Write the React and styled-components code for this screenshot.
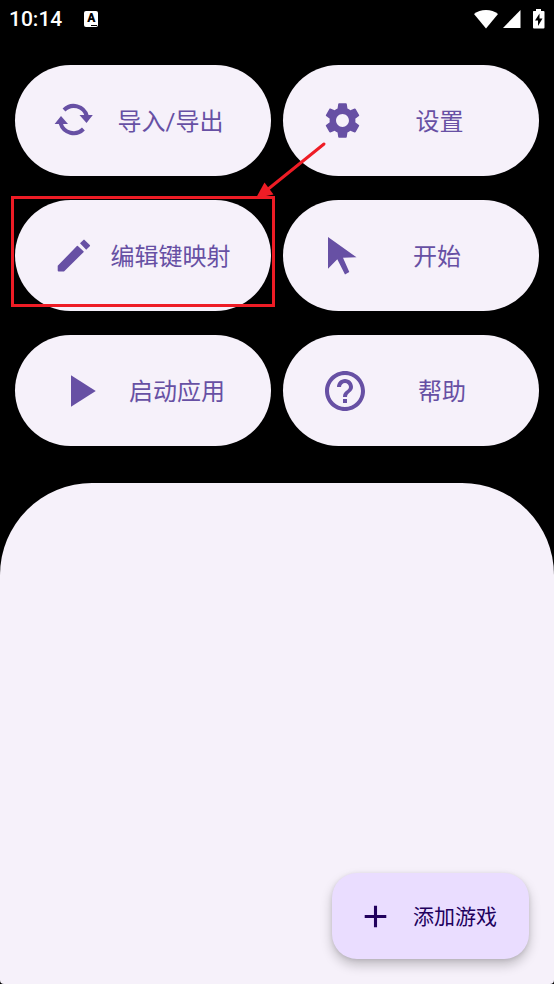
import React from "react";
import styled, { createGlobalStyle } from "styled-components";
import { MdSettings, MdHelpOutline, MdPlayArrow, MdAdd } from "react-icons/md";

const GlobalStyle = createGlobalStyle`
  *, *::before, *::after { box-sizing: border-box; }
  body {
    margin: 0;
    background: #000;
    font-family: Roboto, "Noto Sans CJK SC", sans-serif;
  }
  button { font: inherit; border: 0; cursor: pointer; }
  svg { display: block; flex: none; }
`;

const Screen = styled.div`
  display: flex;
  flex-direction: column;
  min-height: 100vh;
`;

const StatusBar = styled.header`
  display: flex;
  align-items: center;
  height: 38px;
  padding: 0 9px;
  color: #fff;
`;

const Clock = styled.time`
  font-size: 21px;
  font-weight: 500;
  line-height: 24px;
`;

const KeyboardBadge = styled.span`
  display: flex;
  flex-direction: column;
  align-items: center;
  width: 14px;
  height: 16px;
  margin-left: 22px;
  border-radius: 2px;
  background: #fff;
  color: #000;
  font-size: 12px;
  font-weight: 900;
  line-height: 14px;

  &::after {
    content: "";
    width: 6px;
    height: 1px;
    margin-left: 5px;
    background: #000;
  }
`;

const StatusIcons = styled.div`
  display: flex;
  align-items: center;
  gap: 5px;
  margin-left: auto;
`;

const Actions = styled.nav`
  display: grid;
  grid-template-columns: 1fr 1fr;
  gap: 24px 12px;
  padding: 27px 15px 37px;
`;

const Cell = styled.div`
  position: relative;
`;

const ActionButton = styled.button`
  display: flex;
  align-items: center;
  width: 100%;
  height: 111px;
  padding: 0 24px 0 38px;
  border-radius: 56px;
  background: #f6f1fa;
  color: #6750a4;
`;

const ActionLabel = styled.span`
  flex: 1;
  padding-top: 2px;
  font-size: 24px;
  line-height: 36px;
  text-align: center;
  white-space: nowrap;
`;

const Highlight = styled.span`
  position: absolute;
  inset: -4px -4px 4px;
  border: 3px solid #ee1c25;
  pointer-events: none;
`;

const Arrow = styled.svg`
  position: absolute;
  right: -56px;
  top: -60px;
  pointer-events: none;
`;

const GamePanel = styled.main`
  display: flex;
  flex: 1;
  align-items: flex-end;
  justify-content: flex-end;
  min-height: 200px;
  padding: 25px;
  border-radius: 92px 92px 4px 4px;
  background: #f6f1fa;
`;

const AddButton = styled.button`
  display: flex;
  align-items: center;
  gap: 19px;
  height: 86px;
  padding: 0 32px 0 25px;
  border-radius: 25px;
  background: #eaddff;
  color: #21005d;
  box-shadow: 0 6px 12px rgba(0, 0, 0, 0.22), 0 1px 4px rgba(0, 0, 0, 0.1);
  font-size: 21px;
  line-height: 32px;
`;

const AddLabel = styled.span`
  padding-top: 2px;
`;

function SyncIcon() {
  return (
    <svg width="41" height="41" viewBox="0 0 41 41" fill="none" aria-hidden="true">
      <g stroke="currentColor" strokeWidth="4">
        <path d="M11 10A13.600 13.600 0 0 1 33.800 16" />
        <path d="M7.600 23.300A13.600 13.600 0 0 0 30.400 29" />
      </g>
      <path d="M26.500 15L33.500 23L39.800 15ZM1.600 23.900L8 16L15 23.900Z" fill="currentColor" />
    </svg>
  );
}

function PencilIcon() {
  return (
    <svg width="41" height="41" viewBox="0 0 41 41" fill="currentColor" aria-hidden="true">
      <path d="M4.7 35.5V30.8L23.9 11Q24.4 10.5 24.9 11L30.5 16.2Q31 16.7 30.5 17.2L11 36.5H5.7Q4.7 36.5 4.7 35.5Z" />
      <path d="M27 8.2L30.4 4.9Q31 4.3 31.6 4.9L36.8 10.1Q37.4 10.7 36.8 11.3L33.2 14.8Z" />
    </svg>
  );
}

function CursorIcon() {
  return (
    <svg width="38" height="38" viewBox="0 0 38 38" fill="currentColor" aria-hidden="true">
      <path d="M7 0L35.5 20.3L22 20.7L28.3 35L24 37.5L16.3 22.3L7 31.8Z" />
    </svg>
  );
}

const actions = [
  { label: "导入/导出", icon: <SyncIcon /> },
  { label: "设置", icon: <MdSettings size={43} /> },
  { label: "编辑键映射", icon: <PencilIcon />, highlighted: true },
  { label: "开始", icon: <CursorIcon /> },
  { label: "启动应用", icon: <MdPlayArrow size={54} /> },
  { label: "帮助", icon: <MdHelpOutline size={48} /> },
];

function Callout() {
  return (
    <>
      <Highlight />
      <Arrow width="72" height="60" viewBox="0 0 72 60" aria-hidden="true">
        <path d="M69 4L12 50" stroke="#ee1c25" strokeWidth="3" strokeLinecap="round" />
        <path d="M1 58L9.500 42.500L18.500 54.500Z" fill="#ee1c25" />
      </Arrow>
    </>
  );
}

export default function App() {
  return (
    <Screen>
      <GlobalStyle />
      <StatusBar>
        <Clock>10:14</Clock>
        <KeyboardBadge>A</KeyboardBadge>
        <StatusIcons>
          <svg width="24" height="19" viewBox="0 0 24 19" fill="#fff" aria-hidden="true">
            <path d="M12 18.500L0 4Q5 0 12 0T24 4Z" />
          </svg>
          <svg width="18" height="18" viewBox="0 0 18 18" fill="#fff" aria-hidden="true">
            <path d="M0 18L17.500 0V18Z" />
          </svg>
          <svg width="19" height="20" viewBox="0 0 19 20" aria-hidden="true">
            <path d="M7.500 2H10V0H15V2H17.500Q18.500 2 18.500 3V18.500Q18.500 19.500 17.500 19.500H8Q7 19.500 7 18.500V3Q7 2 7.500 2Z" fill="#fff" />
            <path d="M13.500 4.500L9 11.500H12V17L16.500 9.500H13.500Z" fill="#000" />
          </svg>
        </StatusIcons>
      </StatusBar>
      <Actions>
        {actions.map(({ label, icon, highlighted }) => (
          <Cell key={label}>
            <ActionButton type="button">
              {icon}
              <ActionLabel>{label}</ActionLabel>
            </ActionButton>
            {highlighted && <Callout />}
          </Cell>
        ))}
      </Actions>
      <GamePanel>
        <AddButton type="button">
          <MdAdd size={37} />
          <AddLabel>添加游戏</AddLabel>
        </AddButton>
      </GamePanel>
    </Screen>
  );
}
